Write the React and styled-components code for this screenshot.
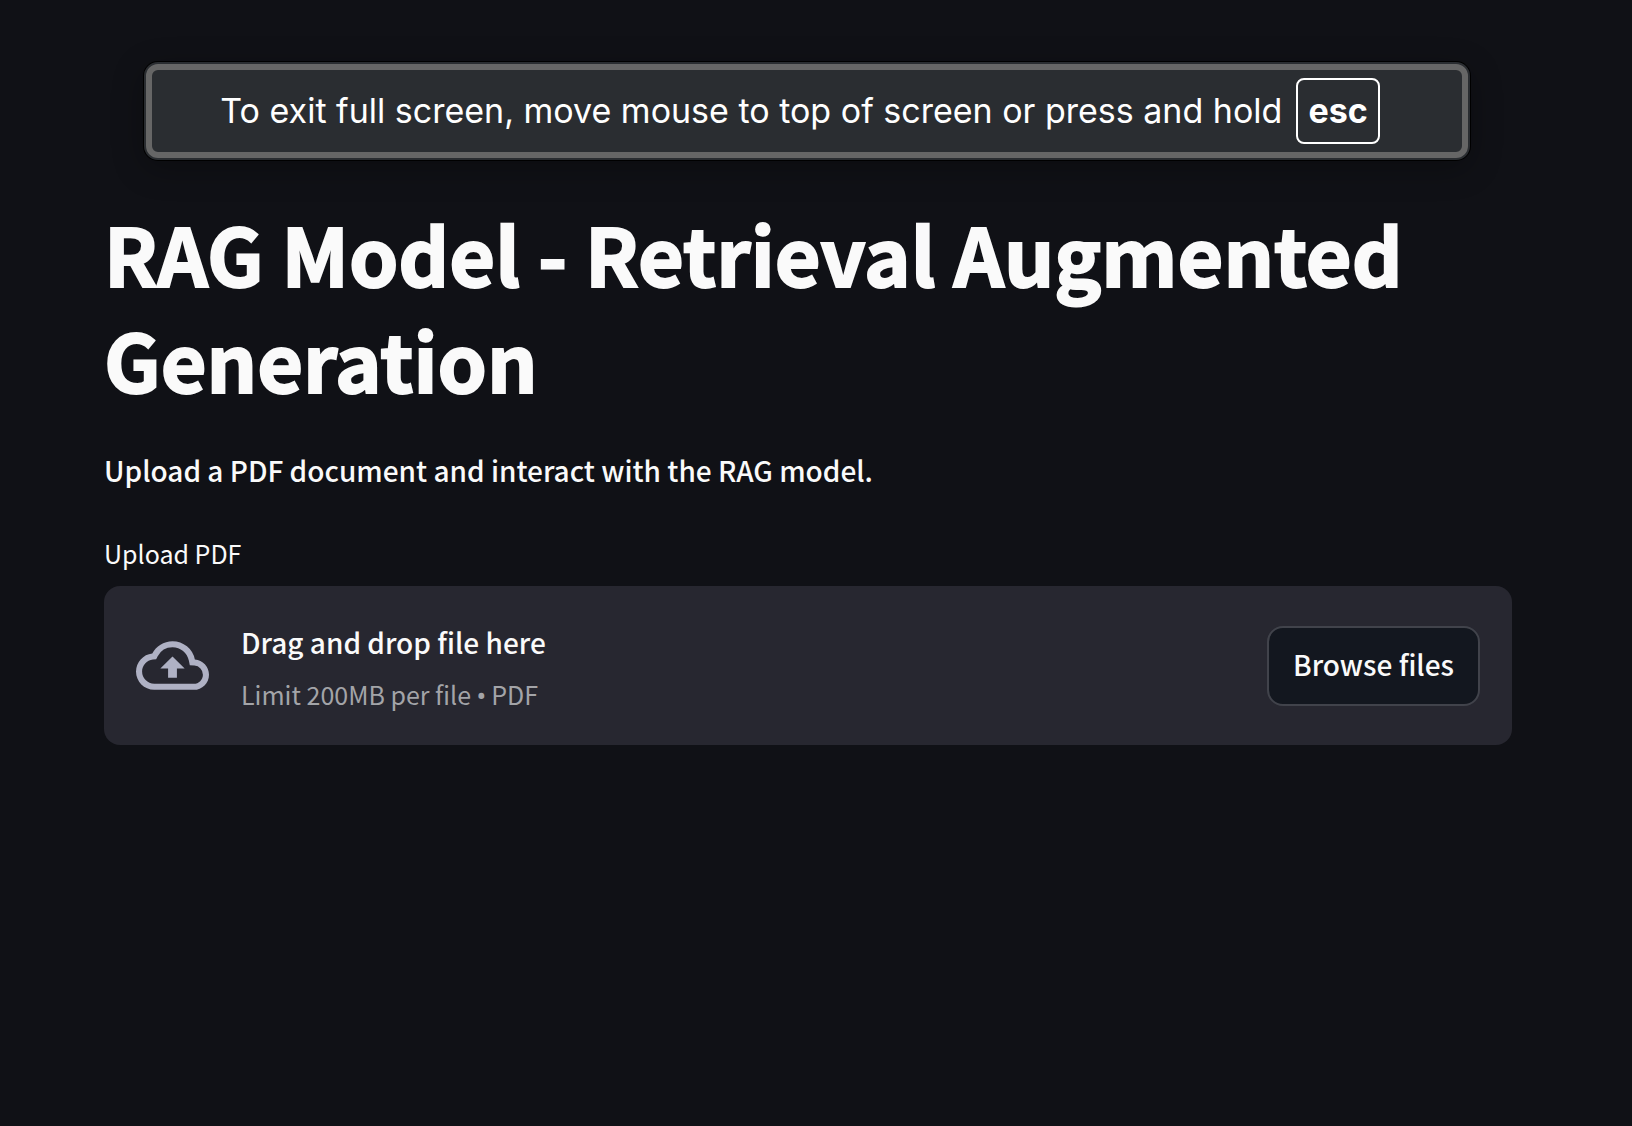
import React, { useRef, useState } from "react";
import styled, { createGlobalStyle } from "styled-components";

const GlobalStyle = createGlobalStyle`
  *, *::before, *::after { box-sizing: border-box; }
  body {
    margin: 0;
    background: #101116;
    color: #fafafa;
    font-family: "Noto Sans CJK SC", "Noto Sans CJK JP", "Open Sans", sans-serif;
    font-weight: 500;
  }
`;

const Page = styled.main`
  min-height: 100vh;
  padding: 62px 120px 64px 104px;
  display: flex;
  flex-direction: column;
`;

const Banner = styled.div`
  margin: 0 42px 0 40px;
  border: 2px solid #2a2d31;
  border-radius: 14px;
  background: #2a2d31;
  box-shadow: 0 0 0 1px #000, 0 8px 32px rgba(0, 0, 0, 0.3);
`;

const BannerFrame = styled.div`
  min-height: 94px;
  padding: 0 24px 0 10px;
  border: 6px solid #666;
  border-radius: 12px;
  display: flex;
  align-items: center;
  justify-content: center;
  gap: 14px;
  color: #fff;
  font-family: Inter, "Liberation Sans", sans-serif;
  font-size: 34px;
  font-weight: 400;
  line-height: 44px;
`;

const Key = styled.kbd`
  padding: 9px 10px;
  border: 2px solid #fff;
  border-radius: 8px;
  font-family: inherit;
  font-size: 34px;
  font-weight: 700;
  line-height: 44px;
`;

const Title = styled.h1`
  margin: 40px 0 0;
  font-size: 79px;
  font-weight: 700;
  line-height: 106px;
  -webkit-text-stroke: 2px #fafafa;
`;

const Intro = styled.p`
  margin: 32px 0 0;
  font-size: 28px;
  line-height: 52px;
`;

const FieldLabel = styled.label`
  margin-top: 36px;
  font-size: 25px;
  font-weight: 400;
  line-height: 42px;
`;

const Dropzone = styled.section`
  margin-top: 12px;
  min-height: 159px;
  padding: 32px;
  border-radius: 16px;
  background: #272730;
  display: flex;
  align-items: center;
  gap: 32px;
`;

const CloudIcon = styled.svg`
  width: 73px;
  height: 73px;
  flex: none;
  fill: #afb1c4;
`;

const Instructions = styled.div`
  flex: 1;
  display: flex;
  flex-direction: column;
  gap: 10px;
`;

const Prompt = styled.span`
  font-size: 28px;
  line-height: 46px;
`;

const Limit = styled.small`
  color: #a3a4a8;
  font-size: 25px;
  font-weight: 400;
  line-height: 38px;
`;

const Bullet = styled.span`
  font-family: Roboto, sans-serif;
  font-weight: 700;
  line-height: 1;
`;

const BrowseButton = styled.button`
  min-height: 80px;
  padding: 0 24px 4px;
  border: 2px solid #41434b;
  border-radius: 16px;
  background: #13171f;
  color: #fafafa;
  font-family: inherit;
  font-size: 28px;
  font-weight: inherit;
  line-height: 52px;
  cursor: pointer;
`;

const FileInput = styled.input`
  display: none;
`;

function CloudUpload() {
  return (
    <CloudIcon viewBox="0 0 24 24" aria-hidden="true">
      <path d="M19.35 10.04A7.49 7.49 0 0 0 12 4C9.11 4 6.6 5.64 5.35 8.04A5.994 5.994 0 0 0 0 14c0 3.31 2.69 6 6 6h13c2.76 0 5-2.24 5-5 0-2.64-2.05-4.78-4.65-4.96zM19 18H6c-2.21 0-4-1.79-4-4 0-2.05 1.53-3.76 3.56-3.97l1.07-.11.5-.95A5.469 5.469 0 0 1 12 6c2.62 0 4.88 1.86 5.39 4.43l.3 1.5 1.53.11A2.98 2.98 0 0 1 22 15c0 1.65-1.35 3-3 3z" />
      <path d="M8 13h2.55v3h2.9v-3H16l-4-4z" />
    </CloudIcon>
  );
}

export default function App() {
  const input = useRef(null);
  const [fileName, setFileName] = useState("");

  return (
    <>
      <GlobalStyle />
      <Page>
        <Banner role="status">
          <BannerFrame>
            <span>To exit full screen, move mouse to top of screen or press and hold</span>
            <Key>esc</Key>
          </BannerFrame>
        </Banner>
        <Title>RAG Model - Retrieval Augmented Generation</Title>
        <Intro>Upload a PDF document and interact with the RAG model.</Intro>
        <FieldLabel htmlFor="pdf-file">Upload PDF</FieldLabel>
        <Dropzone
          onDragOver={(event) => event.preventDefault()}
          onDrop={(event) => {
            event.preventDefault();
            setFileName(event.dataTransfer.files[0]?.name ?? "");
          }}
        >
          <CloudUpload />
          <Instructions>
            <Prompt>{fileName || "Drag and drop file here"}</Prompt>
            <Limit>
              Limit 200MB per file <Bullet>•</Bullet> PDF
            </Limit>
          </Instructions>
          <FileInput
            ref={input}
            id="pdf-file"
            type="file"
            accept="application/pdf"
            onChange={(event) => setFileName(event.target.files[0]?.name ?? "")}
          />
          <BrowseButton type="button" onClick={() => input.current.click()}>
            Browse files
          </BrowseButton>
        </Dropzone>
      </Page>
    </>
  );
}
